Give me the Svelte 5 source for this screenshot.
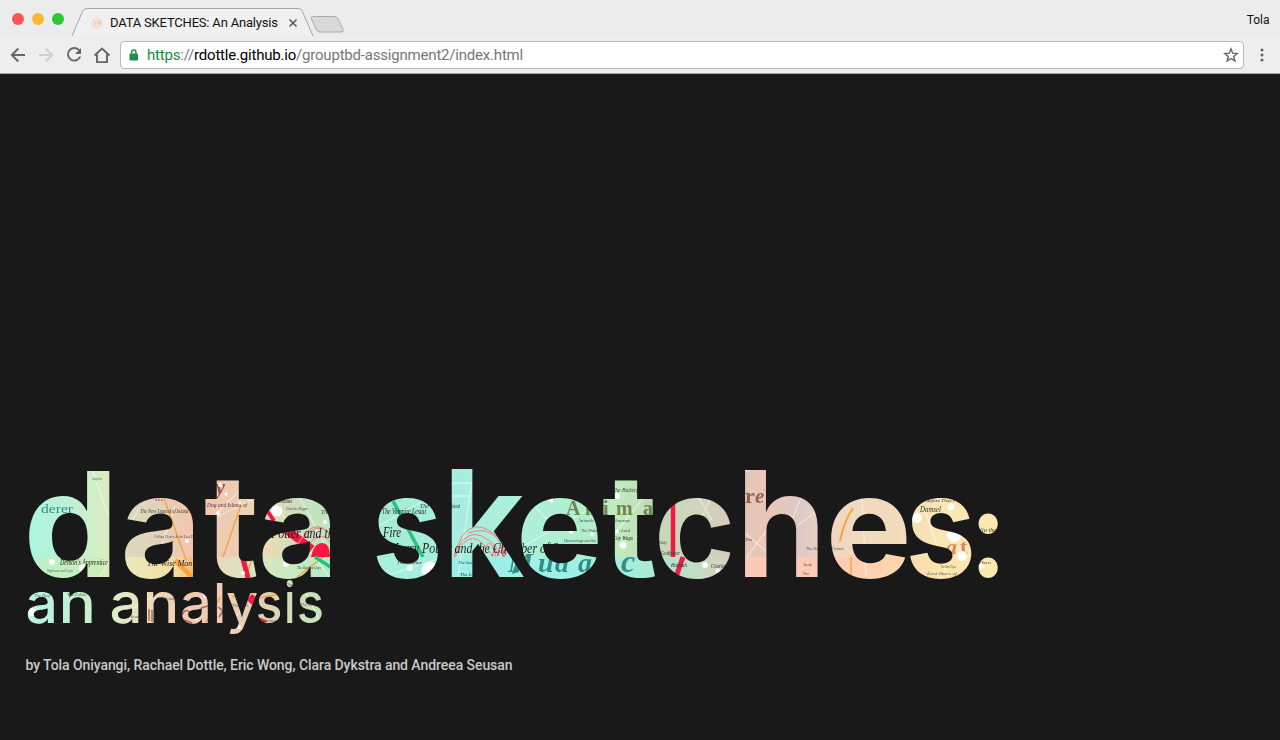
<script>
  // Each glyph: character, left and right ink edge, font size.
  const title = [
    ['d', 28.5, 109.5, 146], ['a', 124.5, 194, 143], ['t', 205, 256.5, 143], ['a', 262, 331, 143], [' '],
    ['s', 376.5, 438, 143], ['k', 451.5, 524.5, 148], ['e', 521, 598, 143], ['t', 603, 655, 143],
    ['c', 658.5, 730.5, 143], ['h', 745, 818.5, 146.5], ['e', 830.5, 906.5, 143], ['s', 910, 971.5, 143], [':', 978.5, 998, 122]
  ];
  const subtitle = [
    ['a', 27.5, 54, 56], ['n', 63, 92, 56], [' '], ['a', 111.5, 138.5, 56], ['n', 147, 175.5, 56],
    ['a', 182, 208, 56], ['l', 217, 222.5, 55.5], ['y', 227, 257, 54], ['s', 257.5, 280.5, 56], ['i', 286.5, 293, 56], ['s', 298.5, 322, 56]
  ];

  const ctx = document.createElement('canvas').getContext('2d');
  function fit(glyphs, weight) {
    let end = 0;
    return glyphs.map(([ch, left, right, size]) => {
      if (ch === ' ') return { ch, x: end, width: 20, size: 20 };
      ctx.font = `${weight} ${size}px Inter`;
      const m = ctx.measureText(ch);
      const scale = (right - left) / (m.actualBoundingBoxRight + m.actualBoundingBoxLeft);
      end = right;
      return { ch, x: left + m.actualBoundingBoxLeft * scale, width: m.width * scale, size };
    });
  }
  const titleGlyphs = fit(title, 700);
  const subtitleGlyphs = fit(subtitle, 500);

  const upper = [
    [28, '#abf5df'], [70, '#bdf0d4'], [102, '#d7eec3'], [128, '#dcd9bd'], [158, '#e1d3bb'],
    [192, '#f4c5ae'], [230, '#edcbb3'], [264, '#eedbb4'], [300, '#c9dfbd'], [331, '#bfe6c1'],
    [380, '#a6ecd2'], [455, '#a6eee0'], [520, '#adf0da'], [575, '#aeefce'], [620, '#c0ebbd'],
    [655, '#c1d9b6'], [700, '#d1d5bf'], [730, '#d6c9bc'], [762, '#eac6b6'], [800, '#ddc9c6'],
    [835, '#f0d8c0'], [900, '#f2dcbb'], [940, '#fae6b5'], [998, '#fbe9b1']
  ];
  const lower = [
    [28, '#bcefcb'], [100, '#ccefb9'], [128, '#ebe9b8'], [175, '#f4dda6'], [192, '#f4bf77'],
    [220, '#e5dbbd'], [262, '#d8e8bd'], [330, '#b4ecc4'], [380, '#aeefda'], [455, '#9aefe7'],
    [580, '#9ef1e6'], [640, '#a5ecd9'], [690, '#bce0c6'], [728, '#d9d0b9'], [745, '#fdc9b7'],
    [830, '#ffcab6'], [905, '#fed7ae'], [940, '#fae4b0'], [998, '#fbe9b1']
  ];
  const under = [
    [27, '#b7f8e7'], [60, '#bcf2d9'], [92, '#c8efca'], [120, '#dfebc7'], [150, '#efd9b8'],
    [190, '#efcab1'], [225, '#efccb5'], [258, '#e5cdb1'], [285, '#d5dcb6'], [322, '#bfe3bc']
  ];

  // Label: text, x, y, size, colour, face, optional set width.
  const labels = [
    ['derer', 41, 513, 12, '#338c8b', 'roman', 32],
    ['Sapphire', 92, 480, 5, '#565', '', 10],
    ["Demon's Apprentice", 60, 565, 8, '#232b20', '', 48],
    ['Nightmares and Crypts', 47, 572, 4.5, '#565', '', 26],
    ['The New Legend of Island of Dr.', 140, 513, 7, '#443c33', '', 60],
    ['Falling Drums & the Last Day of', 154, 538, 5, '#554', '', 46],
    ["The Wise Man's", 147, 566, 9, '#222', '', 50],
    ['y', 216, 494, 20, '#985048', 'bold'],
    ['Dog and Island of', 207, 507, 6, '#534', '', 40],
    ['Potter and the', 271, 538, 14.5, '#171717', '', 68],
    ['Dreams', 277, 503, 6, '#222', '', 15],
    ['Charles Rogue', 286, 510, 5, '#444', '', 22],
    ['The Lake', 321, 514, 6, '#333'],
    ['The Book of Cups', 297, 569, 5, '#343', '', 24],
    ['The Ve', 420, 508, 7, '#233', '', 16],
    ['The Vampire Lestat', 382, 514, 8, '#222', '', 44],
    ['Fire', 383, 537, 15, '#111', '', 18],
    ['Harry Potter and the Chamber of Secrets', 390, 553, 14.5, '#17201a', '', 196],
    ['found', 451, 508, 6, '#333', '', 9],
    ['The Destiny', 397, 564, 5, '#333', '', 25],
    ['The Sea', 458, 564, 5, '#344', '', 14],
    ['The Lo', 460, 576, 5, '#344', '', 14],
    ['A', 566, 515, 20, '#70844f', 'display'],
    ['n', 585, 515, 20, '#70844f', 'display'],
    ['i', 603, 515, 20, '#70844f', 'display'],
    ['m', 616, 515, 20, '#70844f', 'display'],
    ['a', 643, 515, 20, '#70844f', 'display'],
    ['l', 660, 515, 20, '#70844f', 'display'],
    ['Animals', 578, 522, 5, '#445', '', 16],
    ['The Night', 581, 532, 5, '#445', '', 16],
    ['Demonology and the', 564, 542, 5, '#445', '', 32],
    ['The Butterfly', 612, 492, 7, '#343', '', 30],
    ['The Journey', 606, 522, 5, '#343', '', 24],
    ['The Lord', 613, 532, 5, '#343', '', 17],
    ['Coy Wags', 613, 540, 7, '#222', '', 20],
    ['M', 508, 572, 28, '#338c87', 'tilt'],
    ['u', 538, 572, 28, '#338c87', 'tilt'],
    ['d', 555, 572, 28, '#338c87', 'tilt'],
    ['a', 578, 572, 28, '#338c87', 'tilt'],
    ['c', 621, 572, 32, '#338c87', 'tilt'],
    ['Only', 659, 544, 5, '#344', '', 8],
    ['Godfather', 661, 555, 6, '#344', '', 19],
    ['Hannah', 671, 567, 6, '#233', '', 16],
    ['Charlotte', 711, 568, 6, '#333', '', 18],
    ['r', 745, 503, 22, '#95604f', 'display'],
    ['e', 755, 503, 21, '#95604f', 'tilt'],
    ['The', 745, 541, 5, '#544', '', 7],
    ['The Heart and Friends', 806, 550, 5, '#555', '', 38],
    ['Jude', 803, 566, 5, '#554', '', 9],
    ['Two', 803, 575, 5, '#554', '', 6],
    ['Before They Fly', 926, 502, 5, '#332', '', 34],
    ['Damsel', 920, 512, 7.5, '#333', '', 21],
    ['a', 946, 554, 22, '#dc8667', 'tilt'],
    ['t', 960, 554, 22, '#dc8667', 'display'],
    ['The Dark Tiger', 941, 568, 4.5, '#554', '', 15],
    ['Lost Stars of', 927, 575, 4.5, '#554', '', 30],
    ['(to the', 980, 532, 7, '#332', '', 16],
    ['Hero', 979, 564, 4.5, '#443', '', 12]
  ];

  const dots = [
    [52, 562, 3], [83, 568, 4], [134, 524, 1.5], [187, 541, 2], [220, 485, 2],
    [226, 494, 1.5], [218, 513, 2], [240, 503, 1.5], [277, 511, 5.5], [325, 522, 2],
    [286, 564, 3], [243, 573, 2], [410, 568, 3], [430, 570, 8.5], [551, 500, 2.5],
    [571, 532, 2], [592, 534, 2], [617, 496, 3], [617, 531, 2], [623, 545, 3.5],
    [612, 553, 2.5], [705, 565, 3], [718, 571, 2.5], [951, 507, 3.5], [917, 518, 5],
    [954, 535, 7], [962, 556, 5], [982, 566, 2.5]
  ];

  const fineLines = [
    'M92 470L108 515', 'M155 566l20-60', 'M212 518l40-40M212 519l42-20',
    'M270 498l60 80M300 498l32 60', 'M345 545l110-62M452 483h18M452 496h18M458 577l14-95',
    'M520 548l80-45', 'M532 503l22 24', 'M695 530l16-32M699 498l13 22', 'M745 471l18-4',
    'M745 533l28 24M747 557l22-30', 'M792 520l12-30M798 525l24-18', 'M862 500l4 78',
    'M925 510l22 66', 'M603 549l52-66', 'M100 577l40-70', 'M383 577l54-18'
  ];
</script>

<div class="window">
  <header>
    <div class="tabs">
      <div class="lights"><i class="red"></i><i class="amber"></i><i class="green"></i></div>
      <div class="tab">
        <svg class="tab-shape" width="274" height="31" viewBox="0 0 274 31">
          <path d="M0 28 L10.5 3.500 Q12 .5 15 .5 H226 Q229 .5 230.500 3.500 L241 28" fill="#f0f0f0" stroke="#a5a5a5" />
          <path d="M241 8.500 H262 Q265 8.500 266.200 11 L271 21 Q272 24 269 24 H248 Q245.500 24 244.500 22 L239.500 11 Q238.500 8.500 241 8.500Z" fill="#d9d9d9" stroke="#aaa" />
        </svg>
        <svg class="favicon" width="14" height="14" viewBox="0 0 14 14">
          <circle cx="7" cy="7" r="6" fill="#f5e3dc" />
          <path d="M3 4l3 3-3 3M7 3l3 4-3 4M10 4l1 5M5 7h6" fill="none" stroke="#efcabd" />
        </svg>
        <span class="tab-title">DATA SKETCHES: An Analysis</span>
        <svg class="close" width="10" height="10" viewBox="0 0 10 10"><path d="M1.500 1.500l7 7M8.500 1.500l-7 7" stroke="#555" stroke-width="1.500" /></svg>
      </div>
      <span class="user">Tola</span>
    </div>
    <div class="toolbar">
      <svg class="nav" width="108" height="22" viewBox="0 0 108 22" fill="none" stroke="#666" stroke-width="1.900">
        <path d="M25 11H12M18.300 4.500L11.800 11l6.500 6.500" />
        <path d="M39 11h13M45.700 4.500l6.500 6.500-6.500 6.500" stroke="#cecece" />
        <path d="M79.300 6.500A6.300 6.300 0 1 0 80.200 12.500" />
        <path d="M81 4v6h-6z" fill="#666" stroke="none" />
        <path d="M94.500 11.500L102 4.500l7.500 7M97 10.500v7.600h10v-7.600" />
      </svg>
      <div class="address">
        <svg width="10" height="12" viewBox="0 0 10 12"><rect x=".5" y="4.500" width="8.500" height="7" rx="1" fill="#1f8f43" /><path d="M2.500 5V3.200a2.250 2.250 0 0 1 4.500 0V5" fill="none" stroke="#1f8f43" stroke-width="1.400" /></svg>
        <span class="url"><span class="secure">https</span>://<b>rdottle.github.io</b>/grouptbd-assignment2/index.html</span>
        <svg class="star" width="16" height="16" viewBox="0 0 16 16"><path d="M8 1.900l1.700 4.300 4.500.3-3.500 2.900 1.200 4.500L8 11.500l-3.900 2.400 1.200-4.500-3.500-2.900 4.500-.3z" fill="none" stroke="#666" stroke-width="1.400" /></svg>
      </div>
      <svg class="menu" width="4" height="16" viewBox="0 0 4 16" fill="#5f5f5f"><circle cx="2" cy="3" r="1.500" /><circle cx="2" cy="8" r="1.500" /><circle cx="2" cy="13" r="1.500" /></svg>
    </div>
  </header>

  <main>
    <svg class="hero" width="1280" height="180" viewBox="0 460 1280 180">
      <defs>
        {#each [['upper', upper], ['lower', lower], ['under', under]] as [id, stops]}
          <linearGradient {id} gradientUnits="userSpaceOnUse" x1="0" x2="1000" y1="0" y2="0">
            {#each stops as [x, color]}<stop offset={x / 1000} stop-color={color} />{/each}
          </linearGradient>
        {/each}
        <pattern id="map" patternUnits="userSpaceOnUse" x="0" y="460" width="1280" height="120" viewBox="0 460 1280 120">
          <rect y="460" width="1280" height="97" fill="url(#upper)" />
          <rect y="557" width="1280" height="23" fill="url(#lower)" />
          {#each fineLines as d}<path {d} fill="none" stroke="#fff" stroke-opacity=".45" stroke-width="1.300" />{/each}
          <g fill="none" stroke="#f9a33b" stroke-width="1.400">
            <path d="M164 498l22 62M241 505l-18 52M252 558l-4 14M323 557l-26 20M851 557v20" />
            <path d="M840 541q4-20 13-33" stroke-width="2" />
            <path d="M175 560l18 18" stroke-width="5" />
          </g>
          <g fill="none" stroke="#f31945">
            <path d="M266 509l8 12" stroke-width="4" /><path d="M285 529l27 20" stroke-width="8" />
            <path d="M243 559l5 19" stroke-width="5" /><path d="M673 503v54" stroke-width="4.500" /><path d="M683 557l-7 20" stroke-width="5" />
            <path d="M311 557q3-14 11-14t8 14z" fill="#ff1744" stroke="none" />
            <path d="M292 557q20-48 40-20M300 557q20-34 32-12M296 545q24-30 36-7M454 557q14-55 54-10M454 555q18-42 50 2M455 557q16-37 38 0M468 533q30-10 37 24M480 557q10-27 16 0" stroke="#f77c78" />
            <path d="M492 556l3-8 3 8 2-11 3 11 2-7 1 7M155 500h8" stroke-dasharray="2 1" />
          </g>
          <path d="M393 501l30 56M315 557l20 13" stroke="#26c281" stroke-width="3.500" />
          <path d="M512 574l4-12 3 10z" fill="#338c87" />
          {#each labels as [text, x, y, size, color, face, width]}
            <text {x} {y} fill={color} font-size={size} textLength={width} lengthAdjust="spacingAndGlyphs" class={['script', face]}>{text}</text>
          {/each}
          {#each dots as [cx, cy, r]}<circle {cx} {cy} {r} fill="#fff" />{/each}
        </pattern>
        <pattern id="map-small" patternUnits="userSpaceOnUse" x="0" y="578" width="400" height="62" viewBox="0 578 400 62">
          <rect y="578" width="400" height="62" fill="url(#under)" />
          <g fill="none" stroke="#fff" stroke-opacity=".7"><path d="M112 621l40-24M225 625l45-38M60 592l34 20M305 590l14 30" /></g>
          <path d="M28 609q4-3 7-3M206 622l14-25M258 598l22-4M232 596l10 3" stroke="#f9a33b" stroke-width="1.600" fill="none" />
          <path d="M252 594l4 3-4 8-5-5zM258 617l10 4-10 5z" fill="#ff1744" />
          <path d="M149 621v-12M152 622v-12M182 615q4-8 8-2M184 620l8 3M201 608l7-2M218 607l5 4-4 6" stroke="#a6685e" stroke-width="1.500" fill="none" />
          <g fill="#fff"><circle cx="32" cy="612" r="4" /><circle cx="196" cy="617" r="3" /><circle cx="239" cy="627" r="2" /><circle cx="272" cy="604" r="2" /><circle cx="205" cy="596" r="2" /></g>
          <g class="script" font-size="4.500" fill="#565">
            <text x="34" y="597">The Deal</text><text x="67" y="596">The Fallen</text><text x="122" y="618">The Stones</text>
            <text x="156" y="600">The Stone</text><text x="232" y="607">The Lark</text><text x="263" y="622">Summer</text><text x="286" y="586">Fin</text><text x="300" y="606">The King</text>
          </g>
        </pattern>
      </defs>
      <text class="title" y="577" fill="url(#map)">{#each titleGlyphs as g}<tspan x={g.x} font-size={g.size} textLength={g.width} lengthAdjust="spacingAndGlyphs">{g.ch}</tspan>{/each}</text>
      <text class="subtitle" y="623" fill="url(#map-small)">{#each subtitleGlyphs as g}<tspan x={g.x} font-size={g.size} textLength={g.width} lengthAdjust="spacingAndGlyphs">{g.ch}</tspan>{/each}</text>
    </svg>
    <p>by Tola Oniyangi, Rachael Dottle, Eric Wong, Clara Dykstra and Andreea Seusan</p>
  </main>
</div>

<style>
  :global(body) { margin: 0; background: #191919; }
  .window { width: 1280px; height: 740px; overflow: hidden; background: #191919; display: flex; flex-direction: column; font-family: Roboto, sans-serif; }
  header { height: 74px; box-sizing: border-box; background: #eee; border-bottom: 1px solid #a9a9a9; flex: none; }
  .tabs { height: 37px; display: flex; align-items: flex-start; box-sizing: border-box; padding: 8px 10.500px 0 12px; background: #ececec; }
  .lights { display: flex; gap: 8px; padding-top: 5px; width: 60px; flex: none; }
  .lights i { width: 12px; height: 12px; border-radius: 50%; }
  .red { background: #fa5652; }
  .amber { background: #fdb92e; }
  .green { background: #2ac833; }
  .tab { position: relative; width: 274px; height: 29px; display: flex; align-items: center; box-sizing: border-box; padding-left: 18px; }
  .tab-shape { position: absolute; left: 0; top: 0; }
  .favicon, .tab-title, .close { position: relative; }
  .tab-title { margin-left: 6px; font-size: 13px; line-height: 20px; color: #111; letter-spacing: -.19px; white-space: nowrap; width: 168px; }
  .close { margin-left: 10px; }
  .user { margin-left: auto; font-size: 12px; line-height: 24px; color: #111; }
  .toolbar { height: 36px; display: flex; align-items: center; padding-right: 16px; }
  .nav { margin-right: 12px; flex: none; overflow: visible; }
  .address { width: 1124px; height: 28px; box-sizing: border-box; background: #fff; border: 1px solid #b9b9b9; border-radius: 4px; display: flex; align-items: center; padding: 0 4px 0 8px; }
  .url { margin-left: 8px; font-size: 15px; letter-spacing: -.2px; color: #777; white-space: nowrap; }
  .url b { font-weight: 400; color: #000; }
  .url .secure { color: #198b3b; }
  .star { margin-left: auto; }
  .menu { margin-left: auto; }
  main { display: flex; flex-direction: column; padding-top: 386px; }
  .hero { display: block; flex: none; }
  .title, .subtitle { font-family: Inter, sans-serif; white-space: pre; }
  .title { font-weight: 700; }
  .subtitle { font-weight: 500; }
  .script { font-family: "Liberation Serif", serif; font-style: italic; }
  .roman { font-style: normal; }
  .bold { font-weight: 700; }
  .display { font-weight: 700; font-style: normal; }
  .tilt { font-weight: 700; }
  p { margin: 15px 0 0 25.500px; font-size: 14px; line-height: 20px; letter-spacing: -.065px; font-weight: 500; color: #c9c9c9; white-space: nowrap; }
</style>
